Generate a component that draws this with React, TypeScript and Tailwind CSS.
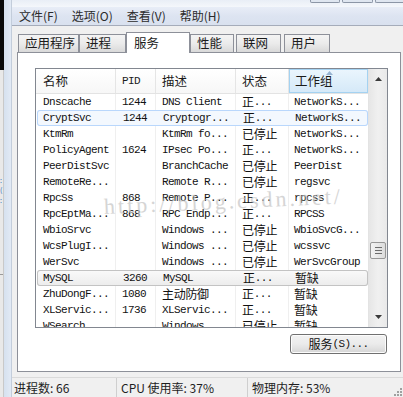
import React from 'react';

type Row = {
  name: string;
  pid: string;
  desc: string;
  status: string;
  group: string;
  mode?: 'hover' | 'focus';
};

const rows: Row[] = [
  { name: 'Dnscache', pid: '1244', desc: 'DNS Client', status: '正...', group: 'NetworkS...' },
  { name: 'CryptSvc', pid: '1244', desc: 'Cryptogr...', status: '正...', group: 'NetworkS...', mode: 'hover' },
  { name: 'KtmRm', pid: '', desc: 'KtmRm fo...', status: '已停止', group: 'NetworkS...' },
  { name: 'PolicyAgent', pid: '1624', desc: 'IPsec Po...', status: '正...', group: 'NetworkS...' },
  { name: 'PeerDistSvc', pid: '', desc: 'BranchCache', status: '已停止', group: 'PeerDist' },
  { name: 'RemoteRe...', pid: '', desc: 'Remote R...', status: '已停止', group: 'regsvc' },
  { name: 'RpcSs', pid: '868', desc: 'Remote P...', status: '正...', group: 'rpcss' },
  { name: 'RpcEptMa...', pid: '868', desc: 'RPC Endp...', status: '正...', group: 'RPCSS' },
  { name: 'WbioSrvc', pid: '', desc: 'Windows ...', status: '已停止', group: 'WbioSvcG...' },
  { name: 'WcsPlugI...', pid: '', desc: 'Windows ...', status: '已停止', group: 'wcssvc' },
  { name: 'WerSvc', pid: '', desc: 'Windows ...', status: '已停止', group: 'WerSvcGroup' },
  { name: 'MySQL', pid: '3260', desc: 'MySQL', status: '正...', group: '暂缺', mode: 'focus' },
  { name: 'ZhuDongF...', pid: '1080', desc: '主动防御', status: '正...', group: '暂缺' },
  { name: 'XLServic...', pid: '1736', desc: 'XLServic...', status: '正...', group: '暂缺' },
  { name: 'WSearch', pid: '', desc: 'Windows...', status: '已停止', group: '暂缺' },
];

const cjkRe = /([\u3400-\u9fff]+)/;

// split a cell into CJK / latin runs so each gets the right font
const Mixed: React.FC<{ text: string }> = ({ text }) => (
  <>
    {text.split(cjkRe).filter(Boolean).map((part, i) =>
      cjkRe.test(part) ? (
        <span key={i} className="font-['Noto_Sans_CJK_SC',sans-serif] text-[12px] tracking-[-0.3px]">{part}</span>
      ) : (
        <span key={i} className="font-['Liberation_Mono','Noto_Sans_CJK_SC',monospace] text-[11px] tracking-[-0.6px] whitespace-pre">{part}</span>
      )
    )}
  </>
);

const colW = ['w-[80px]', 'w-[40px]', 'w-[80px]', 'w-[53px]', 'w-[79px]'];
const colPad = ['pl-[7px]', 'pl-[6px]', 'pl-[6px]', 'pl-[6px]', 'pl-[5px]'];

const ListRow: React.FC<{ row: Row }> = ({ row }) => {
  const cells = [row.name, row.pid, row.desc, row.status, row.group];
  const sel = row.mode === 'hover'
    ? 'bg-[#f3f8fe] shadow-[inset_0_0_0_1px_#b9d7fc] rounded-[3px] ml-[1px]'
    : row.mode === 'focus'
    ? 'bg-gradient-to-b from-[#fafafa] to-[#ececec] shadow-[inset_0_0_0_1px_#c3c3c3] rounded-[3px] ml-[1px]'
    : '';
  return (
    <div className={`flex h-[16px] shrink-0 text-[#111] ${sel}`}>
      {cells.map((c, i) => (
        <div
          key={i}
          className={`${colW[i]} ${row.mode && i === 0 ? 'pl-[6px] w-[79px]' : colPad[i]} shrink-0 h-full flex items-center overflow-hidden whitespace-nowrap ${
            i < 4 && !row.mode ? 'border-r border-[#efefef]' : ''
          }`}
        >
          <Mixed text={c} />
        </div>
      ))}
    </div>
  );
};

const Tab: React.FC<{ label: string; w: string; active?: boolean; gap?: string }> = ({ label, w, active, gap }) =>
  active ? (
    <div className={`${w} ${gap ?? ''} h-[21px] -mb-[1px] relative z-10 bg-white border border-b-0 border-[#8d9099] flex items-start pt-[1px] pl-[7px] text-[12.5px]`}>
      {label}
    </div>
  ) : (
    <div className={`${w} ${gap ?? ''} h-[18px] bg-gradient-to-b from-[#f4f4f4] via-[#ebebeb] to-[#d9d9d9] border border-b-0 border-[#8d9099] flex items-center pl-[6px] text-[12.5px]`}>
      {label}
    </div>
  );

export default function App() {
  return (
    <div className="w-[403px] h-[397px] overflow-hidden flex bg-[#f0f0f0] relative font-['Noto_Sans_CJK_SC','Liberation_Sans',sans-serif] text-[#1b1b1b]">
      {/* desktop sliver + window frame */}
      <div className="w-[4px] flex flex-col shrink-0">
        <div className="h-[70px] bg-[#0a0a0a]" />
        <div className="flex-1 bg-[#e9e9e9] border-r border-[#c9c9c9] flex flex-col">
          <div className="h-[105px]" />
          <div className="h-[30px] text-[7px] leading-[10px] text-[#2a6fc0]">:<br />(<br />:</div>
          <div className="h-[70px] border-b border-[#9a9a9a]" />
        </div>
      </div>
      <div className="w-[8px] shrink-0 bg-gradient-to-r from-[#d6e1ef] to-[#e2eaf5] border-r border-[#c3cddb]" />

      <div className="flex-1 flex flex-col min-w-0">
        {/* title bar remnant */}
        <div className="h-[7px] shrink-0 bg-gradient-to-b from-[#e9eef6] to-[#f4f7fb] flex">
          <div className="flex-1" />
          <div className="flex h-[3px] gap-[2px]">
            <div className="w-[30px] border-x border-b border-[#8c96a6] rounded-b-[2px] bg-[#dfe6f0]" />
            <div className="w-[31px] border-x border-b border-[#8c96a6] rounded-b-[2px] bg-[#dfe6f0]" />
            <div className="w-[28px] border-l border-b border-[#8c96a6] rounded-bl-[2px] bg-[#dfe6f0]" />
          </div>
        </div>

        {/* menu bar */}
        <div className="h-[19px] shrink-0 bg-gradient-to-b from-[#e8edf7] via-[#dde4f1] to-[#d9e1ef] border-b border-[#a5acba] flex items-center gap-[14px] pl-[7px] text-[12px] text-[#2b2b2b]">
          <span>文件(F)</span>
          <span>选项(O)</span>
          <span>查看(V)</span>
          <span>帮助(H)</span>
        </div>

        {/* tabs */}
        <div className="h-[26px] shrink-0 flex items-end pl-[6px] pt-[6px]">
          <Tab label="应用程序" w="w-[61px]" />
          <Tab label="进程" w="w-[47px]" />
          <Tab label="服务" w="w-[64px]" active />
          <Tab label="性能" w="w-[44px]" />
          <Tab label="联网" w="w-[45px]" gap="ml-[2px]" />
          <Tab label="用户" w="w-[46px]" gap="ml-[3px]" />
        </div>

        {/* tab panel */}
        <div className="h-[320px] shrink-0 ml-[5px] w-[384px] bg-white border border-[#8d9099] pl-[17px] pt-[15px] flex flex-col">
          <div className="w-[353px] h-[260px] border border-[#828790] flex relative">
            <div className="w-[332px] flex flex-col overflow-hidden">
              {/* header */}
              <div className="h-[25px] shrink-0 flex border-b border-[#e3e3e3] bg-gradient-to-b from-white to-[#f7f7f7]">
                <div className="w-[80px] pl-[7px] border-r border-[#e5e5e5] flex items-center text-[12.5px]">名称</div>
                <div className="w-[40px] pl-[6px] border-r border-[#e5e5e5] flex items-center font-['Liberation_Mono',monospace] text-[11px] tracking-[-0.6px]">PID</div>
                <div className="w-[80px] pl-[6px] border-r border-[#e5e5e5] flex items-center text-[12.5px]">描述</div>
                <div className="w-[53px] pl-[6px] border-r border-[#e5e5e5] flex items-center text-[12.5px]">状态</div>
                <div className="w-[79px] pl-[5px] relative bg-gradient-to-b from-[#eaf5fd] to-[#d5e9f8] border border-[#a4d2f1] flex items-center text-[12.5px]">
                  工作组
                  <svg className="absolute left-[36px] top-[1px]" width="7" height="4" viewBox="0 0 7 4">
                    <path d="M0 4 L3.5 0 L7 4 Z" fill="#97b4d2" />
                  </svg>
                </div>
              </div>
              {/* rows */}
              <div className="flex-1 flex flex-col overflow-hidden">
                {rows.map((r, i) => (
                  <ListRow key={i} row={r} />
                ))}
              </div>
            </div>

            {/* scrollbar */}
            <div className="w-[19px] flex flex-col bg-gradient-to-r from-[#e6e6e6] via-[#f0f0f0] to-[#e9e9e9] border-l border-[#e3e3e3]">
              <div className="h-[17px] flex items-center justify-center pt-[3px]">
                <svg width="7" height="4" viewBox="0 0 7 4"><path d="M0 4 L3.5 0 L7 4 Z" fill="#3a3a3a" /></svg>
              </div>
              <div className="h-[156px]" />
              <div className="h-[17px] mx-[1px] rounded-[2px] border border-[#979797] bg-gradient-to-r from-[#f3f3f3] to-[#dcdcdc] flex flex-col items-center justify-center gap-[2px]">
                <div className="w-[7px] h-[1px] bg-[#6d6d6d]" />
                <div className="w-[7px] h-[1px] bg-[#6d6d6d]" />
                <div className="w-[7px] h-[1px] bg-[#6d6d6d]" />
              </div>
              <div className="flex-1" />
              <div className="h-[17px] flex items-center justify-center pb-[3px]">
                <svg width="7" height="4" viewBox="0 0 7 4"><path d="M0 0 L7 0 L3.5 4 Z" fill="#3a3a3a" /></svg>
              </div>
            </div>
          </div>

          <div className="w-[353px] flex justify-end mt-[6px] pr-[1px]">
            <button className="w-[97px] h-[20px] rounded-[3px] border border-[#707070] bg-gradient-to-b from-[#f2f2f2] via-[#ebebeb] to-[#d6d6d6] shadow-[inset_0_0_0_1px_#fcfcfc] flex items-center justify-center text-[12px] text-[#111]">
              <span className="font-['Noto_Sans_CJK_SC',sans-serif]">服务</span>
              <span className="font-['Liberation_Mono',monospace] text-[11px] tracking-[-0.6px]">(S)...</span>
            </button>
          </div>
        </div>

        <div className="h-[5px] shrink-0" />

        {/* status bar */}
        <div className="h-[20px] shrink-0 flex border-t border-[#dadada] text-[12px] text-[#1e1e1e]">
          <div className="w-[105px] pl-[2px] flex items-center border-r border-[#cfcfcf]">进程数: 66</div>
          <div className="w-[131px] pl-[4px] flex items-center border-r border-[#cfcfcf]">CPU 使用率: 37%</div>
          <div className="flex-1 pl-[4px] flex items-center relative">
            物理内存: 53%
            <div className="absolute right-[1px] bottom-[1px] grid grid-cols-3 gap-[1px]">
              <span className="w-[2px] h-[2px]" /><span className="w-[2px] h-[2px]" /><span className="w-[2px] h-[2px] bg-[#a0a0a0]" />
              <span className="w-[2px] h-[2px]" /><span className="w-[2px] h-[2px] bg-[#a0a0a0]" /><span className="w-[2px] h-[2px] bg-[#a0a0a0]" />
              <span className="w-[2px] h-[2px] bg-[#a0a0a0]" /><span className="w-[2px] h-[2px] bg-[#a0a0a0]" /><span className="w-[2px] h-[2px] bg-[#a0a0a0]" />
            </div>
          </div>
        </div>
      </div>

      {/* csdn watermark over the list */}
      <div className="absolute left-[104px] top-[190px] -rotate-[2.5deg] origin-left font-['Liberation_Serif',serif] text-[22px] tracking-[3px] text-[#c4c4c4] opacity-70 pointer-events-none whitespace-nowrap">
        http://blog.csdn.net/
      </div>
    </div>
  );
}
